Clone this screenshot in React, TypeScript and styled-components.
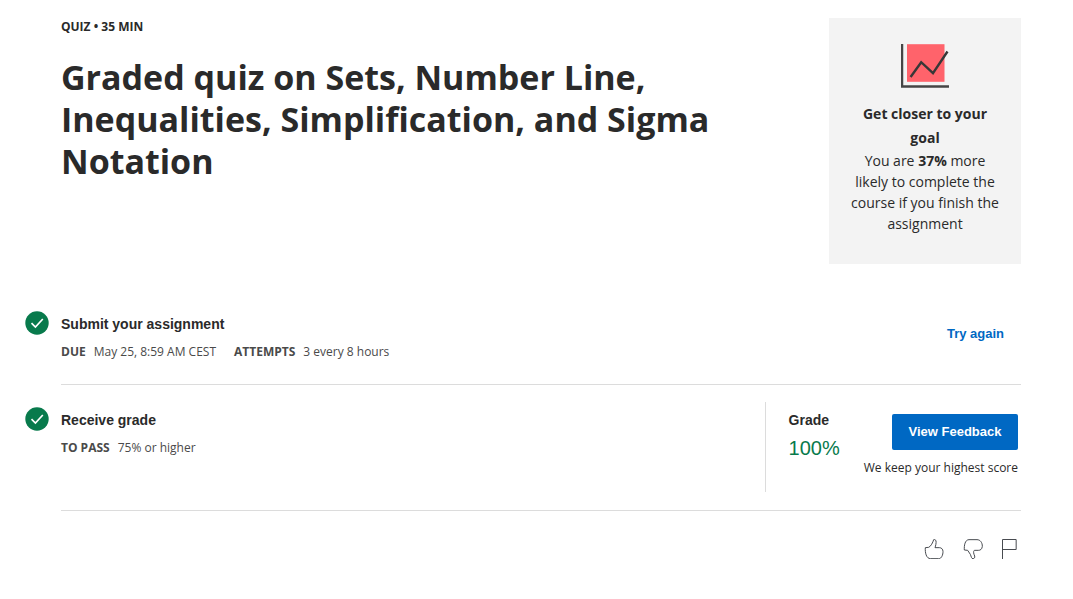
import React from "react";
import styled, { createGlobalStyle } from "styled-components";

const sans = `"Open Sans", "Noto Sans", sans-serif`;
const helvetica = `"Liberation Sans", Arial, sans-serif`;

const GlobalStyle = createGlobalStyle`
  * { box-sizing: border-box; }
  body { margin: 0; background: #fff; color: #2a2a2a; font-family: ${sans}; }
  h1, h2, h3, p, dl, dd { margin: 0; }
  button { border: 0; cursor: pointer; }
  svg { display: block; }
`;

const Page = styled.main`
  padding: 18px 52px 0 25px;
`;

const Header = styled.header`
  display: flex;
  align-items: flex-start;
  justify-content: space-between;
  gap: 96px;
  padding-left: 36px;
`;

const Kicker = styled.p`
  font-size: 12px;
  line-height: 18px;
  font-weight: 700;
`;

const Title = styled.h1`
  margin-top: 20px;
  font-size: 34px;
  line-height: 42px;
  font-weight: 700;
`;

const GoalCard = styled.aside`
  display: flex;
  flex: 0 0 192px;
  flex-direction: column;
  align-items: center;
  padding: 24px 20px 30px;
  background: #f3f3f3;
  text-align: center;
  font-size: 14px;
  line-height: 21px;
`;

const GoalTitle = styled.h2`
  margin-top: 14px;
  font-size: 14px;
  line-height: 24px;
  font-weight: 700;
`;

const Steps = styled.section`
  margin-top: 30px;
`;

const Step = styled.article`
  display: grid;
  grid-template-columns: 36px 1fr;
`;

const CheckCell = styled.div<{ $top: number }>`
  padding-top: ${({ $top }) => $top}px;
`;

const StepBody = styled.div`
  display: flex;
  align-items: flex-start;
  justify-content: space-between;
  border-bottom: 1px solid #dcdcdc;
`;

const StepInfo = styled.div<{ $top: number }>`
  padding: ${({ $top }) => $top}px 0 23px;
`;

const StepTitle = styled.h3`
  font-family: ${helvetica};
  font-size: 14px;
  line-height: 20px;
  font-weight: 700;
`;

const Details = styled.dl`
  display: flex;
  gap: 18px;
  margin-top: 9px;
  font-size: 12px;
  line-height: 18px;
  color: #4a4a4a;
`;

const Detail = styled.div`
  display: flex;
  gap: 8px;
`;

const Term = styled.dt`
  font-weight: 700;
`;

const TryAgain = styled.button`
  margin: 22px 1px 0 0;
  padding: 8px 16px;
  background: transparent;
  color: #0068c3;
  font: 700 13px/20px ${helvetica};
`;

const GradePanel = styled.div`
  display: flex;
  gap: 24px;
  margin: 17px 0 18px;
  padding: 8px 3px 15px 23px;
  border-left: 1px solid #dcdcdc;
`;

const GradeValue = styled.p`
  margin-top: 4px;
  color: #087a4c;
  font: 400 20px/28px ${helvetica};
`;

const Feedback = styled.div`
  display: flex;
  flex-direction: column;
  align-items: flex-end;
  margin-top: 4px;
  font-size: 12px;
  line-height: 18px;
`;

const FeedbackButton = styled.button`
  min-width: 126px;
  margin-bottom: 9px;
  padding: 8px 16px;
  border-radius: 2px;
  background: #0068c3;
  color: #fff;
  font: 700 13px/20px ${helvetica};
`;

const Reactions = styled.footer`
  display: flex;
  justify-content: flex-end;
  gap: 18px;
  padding: 28px 4px 0 0;
`;

const IconButton = styled.button`
  padding: 0;
  background: transparent;
`;

const CheckMark = () => (
  <svg width="24" height="24" viewBox="0 0 24 24" role="img" aria-label="Completed">
    <circle cx="12" cy="12" r="11.7" fill="#087a4c" />
    <path d="M6.5 12.2 10.4 16 17.8 8" fill="none" stroke="#fff" strokeWidth="1.7" />
  </svg>
);

const ChartIcon = () => (
  <svg width="48" height="46" viewBox="0 0 48 46" aria-hidden="true">
    <rect x="6" y="2.2" width="37.5" height="37.6" fill="#ff636b" />
    <path d="M1 2v42.5h47" fill="none" stroke="#454545" strokeWidth="2.5" />
    <path d="M9.6 35 20.2 20.2 32 31.2 46.5 9.5" fill="none" stroke="#373737" strokeWidth="2.4" />
  </svg>
);

const glyphs = {
  up: { width: 21, path: "M4 26C3 40 6 59 20 59h24C53 59 57 47 57 38C57 30 52 26 46 26H33C35 20 37 12 36 6C35 2 32 1 29 2C27 10 20 23 14 25Z" },
  down: { width: 20, path: "M4 33C3 20 6 2 18 2h24C52 2 58 11 58 22C57 31 52 34 46 34H34C30 38 32 44 35 51C36 56 34 59 30 59C25 59 25 53 22 46L14 34Z" },
  flag: { width: 16, path: "M4.5 60V1.5h41v30h-41" },
};

function Glyph({ name }: { name: keyof typeof glyphs }) {
  const { width, path } = glyphs[name];
  return (
    <svg width={width} height="20" viewBox={`0 0 ${width * 3} 60`} fill="none" stroke="#484b50" strokeWidth="3" aria-hidden="true">
      <path d={path} />
    </svg>
  );
}

export default function App() {
  return (
    <>
      <GlobalStyle />
      <Page>
        <Header>
          <div>
            <Kicker>QUIZ • 35 MIN</Kicker>
            <Title>Graded quiz on Sets, Number Line, Inequalities, Simplification, and Sigma Notation</Title>
          </div>
          <GoalCard>
            <ChartIcon />
            <GoalTitle>Get closer to your goal</GoalTitle>
            <p>You are <strong>37%</strong> more likely to complete the course if you finish the assignment</p>
          </GoalCard>
        </Header>
        <Steps>
          <Step>
            <CheckCell $top={17}><CheckMark /></CheckCell>
            <StepBody>
              <StepInfo $top={20}>
                <StepTitle>Submit your assignment</StepTitle>
                <Details>
                  <Detail><Term>DUE</Term><dd>May 25, 8:59 AM CEST</dd></Detail>
                  <Detail><Term>ATTEMPTS</Term><dd>3 every 8 hours</dd></Detail>
                </Details>
              </StepInfo>
              <TryAgain type="button">Try again</TryAgain>
            </StepBody>
          </Step>
          <Step>
            <CheckCell $top={22}><CheckMark /></CheckCell>
            <StepBody>
              <StepInfo $top={25}>
                <StepTitle>Receive grade</StepTitle>
                <Details>
                  <Detail><Term>TO PASS</Term><dd>75% or higher</dd></Detail>
                </Details>
              </StepInfo>
              <GradePanel>
                <div>
                  <StepTitle>Grade</StepTitle>
                  <GradeValue>100%</GradeValue>
                </div>
                <Feedback>
                  <FeedbackButton type="button">View Feedback</FeedbackButton>
                  <p>We keep your highest score</p>
                </Feedback>
              </GradePanel>
            </StepBody>
          </Step>
        </Steps>
        <Reactions>
          <IconButton type="button" aria-label="Like"><Glyph name="up" /></IconButton>
          <IconButton type="button" aria-label="Dislike"><Glyph name="down" /></IconButton>
          <IconButton type="button" aria-label="Report an issue"><Glyph name="flag" /></IconButton>
        </Reactions>
      </Page>
    </>
  );
}
